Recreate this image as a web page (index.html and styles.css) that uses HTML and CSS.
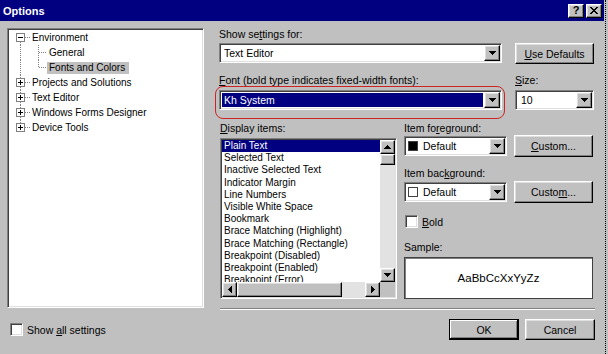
FILE: index.html
```html
<!DOCTYPE html>
<html>
<head>
<meta charset="utf-8">
<title>Options</title>
<link rel="stylesheet" href="styles.css">
</head>
<body>
<div class="window">
  <div class="titlebar">
    <span class="title">Options</span>
    <div class="tb-btns">
      <span class="tb-btn raised help">?</span>
      <span class="tb-btn raised close"><svg width="8" height="7" viewBox="0 0 8 7"><path d="M0 0h2v1h-2zM6 0h2v1h-2zM1 1h2v1h-2zM5 1h2v1h-2zM2 2h4v1h-4zM3 3h2v1h-2zM2 4h4v1h-4zM1 5h2v1h-2zM5 5h2v1h-2zM0 6h2v1h-2zM6 6h2v1h-2z" fill="#000"/></svg></span>
    </div>
  </div>

  <div class="main">
    <div class="tree sunken">
      <div class="node">
        <svg width="21" height="15" shape-rendering="crispEdges"><g stroke="#808080" stroke-dasharray="1 1" fill="none"><line x1="11.5" y1="12" x2="11.5" y2="15"/><line x1="16" y1="7.5" x2="21" y2="7.5"/></g><rect x="7.5" y="3.5" width="8" height="8" fill="#fff" stroke="#808080"/><path d="M9 7.5h5" stroke="#000"/></svg>
        <span class="txt">Environment</span>
      </div>
      <div class="node">
        <svg width="38" height="15" shape-rendering="crispEdges"><g stroke="#808080" stroke-dasharray="1 1" fill="none"><line x1="11.5" y1="0" x2="11.5" y2="15"/><line x1="29.5" y1="0" x2="29.5" y2="15"/><line x1="30" y1="7.5" x2="38" y2="7.5"/></g></svg>
        <span class="txt">General</span>
      </div>
      <div class="node">
        <svg width="38" height="15" shape-rendering="crispEdges"><g stroke="#808080" stroke-dasharray="1 1" fill="none"><line x1="11.5" y1="0" x2="11.5" y2="15"/><line x1="29.5" y1="0" x2="29.5" y2="8"/><line x1="30" y1="7.5" x2="38" y2="7.5"/></g></svg>
        <span class="txt selected">Fonts and Colors</span>
      </div>
      <div class="node">
        <svg width="21" height="15" shape-rendering="crispEdges"><g stroke="#808080" stroke-dasharray="1 1" fill="none"><line x1="11.5" y1="0" x2="11.5" y2="15"/><line x1="16" y1="7.5" x2="21" y2="7.5"/></g><rect x="7.5" y="3.5" width="8" height="8" fill="#fff" stroke="#808080"/><path d="M9 7.5h5M11.5 5v5" stroke="#000"/></svg>
        <span class="txt">Projects and Solutions</span>
      </div>
      <div class="node">
        <svg width="21" height="15" shape-rendering="crispEdges"><g stroke="#808080" stroke-dasharray="1 1" fill="none"><line x1="11.5" y1="0" x2="11.5" y2="15"/><line x1="16" y1="7.5" x2="21" y2="7.5"/></g><rect x="7.5" y="3.5" width="8" height="8" fill="#fff" stroke="#808080"/><path d="M9 7.5h5M11.5 5v5" stroke="#000"/></svg>
        <span class="txt">Text Editor</span>
      </div>
      <div class="node">
        <svg width="21" height="15" shape-rendering="crispEdges"><g stroke="#808080" stroke-dasharray="1 1" fill="none"><line x1="11.5" y1="0" x2="11.5" y2="15"/><line x1="16" y1="7.5" x2="21" y2="7.5"/></g><rect x="7.5" y="3.5" width="8" height="8" fill="#fff" stroke="#808080"/><path d="M9 7.5h5M11.5 5v5" stroke="#000"/></svg>
        <span class="txt">Windows Forms Designer</span>
      </div>
      <div class="node">
        <svg width="21" height="15" shape-rendering="crispEdges"><g stroke="#808080" stroke-dasharray="1 1" fill="none"><line x1="11.5" y1="0" x2="11.5" y2="4"/><line x1="16" y1="7.5" x2="21" y2="7.5"/></g><rect x="7.5" y="3.5" width="8" height="8" fill="#fff" stroke="#808080"/><path d="M9 7.5h5M11.5 5v5" stroke="#000"/></svg>
        <span class="txt">Device Tools</span>
      </div>
    </div>

    <div class="right">
      <div class="lbl">Show se<u>t</u>tings for:</div>
      <div class="row r-show">
        <div class="combo sunken c-show">
          <span class="ctext">Text Editor</span>
          <span class="ddbtn raised"><svg width="7" height="4" viewBox="0 0 7 4"><path d="M0 0h7v1h-1v1h-1v1h-1v1h-1v-1h-1v-1h-1v-1h-1z" fill="#000"/></svg></span>
        </div>
        <div class="btn raised b-def"><span><u>U</u>se Defaults</span></div>
      </div>

      <div class="row r-font">
        <div class="fcol">
          <div class="lbl"><u>F</u>ont (bold type indicates fixed-width fonts):</div>
          <div class="combo sunken c-font">
            <span class="ctext sel">Kh System</span>
            <span class="ddbtn raised"><svg width="7" height="4" viewBox="0 0 7 4"><path d="M0 0h7v1h-1v1h-1v1h-1v1h-1v-1h-1v-1h-1v-1h-1z" fill="#000"/></svg></span>
          </div>
        </div>
        <div class="scol">
          <div class="lbl"><u>S</u>ize:</div>
          <div class="combo sunken c-size">
            <span class="ctext">10</span>
            <span class="ddbtn raised"><svg width="7" height="4" viewBox="0 0 7 4"><path d="M0 0h7v1h-1v1h-1v1h-1v1h-1v-1h-1v-1h-1v-1h-1z" fill="#000"/></svg></span>
          </div>
        </div>
      </div>

      <div class="lower">
        <div class="dcol">
          <div class="lbl"><u>D</u>isplay items:</div>
          <div class="list sunken">
            <div class="items">
              <div class="item sel">Plain Text</div>
              <div class="item">Selected Text</div>
              <div class="item">Inactive Selected Text</div>
              <div class="item">Indicator Margin</div>
              <div class="item">Line Numbers</div>
              <div class="item">Visible White Space</div>
              <div class="item">Bookmark</div>
              <div class="item">Brace Matching (Highlight)</div>
              <div class="item">Brace Matching (Rectangle)</div>
              <div class="item">Breakpoint (Disabled)</div>
              <div class="item">Breakpoint (Enabled)</div>
              <div class="item">Breakpoint (Error)</div>
            </div>
            <div class="vscroll">
              <span class="sb-btn raised"><svg width="7" height="4" viewBox="0 0 7 4"><path d="M3 0h1v1h1v1h1v1h1v1h-7v-1h1v-1h1v-1h1z" fill="#000"/></svg></span>
              <span class="thumb-v raised"></span>
              <span class="track"></span>
              <span class="sb-btn raised"><svg width="7" height="4" viewBox="0 0 7 4"><path d="M0 0h7v1h-1v1h-1v1h-1v1h-1v-1h-1v-1h-1v-1h-1z" fill="#000"/></svg></span>
            </div>
            <div class="hscroll">
              <span class="sb-btn raised"><svg width="4" height="7" viewBox="0 0 4 7"><path d="M3 0h1v7h-1v-1h-1v-1h-1v-1h-1v-1h1v-1h1v-1h1z" fill="#000"/></svg></span>
              <span class="thumb-h raised"></span>
              <span class="track"></span>
              <span class="sb-btn raised"><svg width="4" height="7" viewBox="0 0 4 7"><path d="M0 0h1v1h1v1h1v1h1v1h-1v1h-1v1h-1v1h-1z" fill="#000"/></svg></span>
            </div>
            <div class="corner"></div>
          </div>
        </div>

        <div class="pcol">
          <div class="lbl">Item fo<u>r</u>eground:</div>
          <div class="row r-color">
            <div class="combo sunken c-color">
              <span class="swatch black"></span>
              <span class="ctext">Default</span>
              <span class="ddbtn raised"><svg width="7" height="4" viewBox="0 0 7 4"><path d="M0 0h7v1h-1v1h-1v1h-1v1h-1v-1h-1v-1h-1v-1h-1z" fill="#000"/></svg></span>
            </div>
            <div class="btn raised b-custom"><span><u>C</u>ustom...</span></div>
          </div>
          <div class="lbl l-bg">Item bac<u>k</u>ground:</div>
          <div class="row r-color r-bg">
            <div class="combo sunken c-color">
              <span class="swatch white"></span>
              <span class="ctext">Default</span>
              <span class="ddbtn raised"><svg width="7" height="4" viewBox="0 0 7 4"><path d="M0 0h7v1h-1v1h-1v1h-1v1h-1v-1h-1v-1h-1v-1h-1z" fill="#000"/></svg></span>
            </div>
            <div class="btn raised b-custom"><span>Custo<u>m</u>...</span></div>
          </div>
          <div class="check-row bold-row">
            <span class="check sunken"></span>
            <span><u>B</u>old</span>
          </div>
          <div class="lbl l-sample">Sample:</div>
          <div class="sample">AaBbCcXxYyZz</div>
        </div>
      </div>

      <div class="sep"></div>
    </div>
  </div>

  <div class="footer">
    <div class="check-row">
      <span class="check sunken"></span>
      <span>Show <u>a</u>ll settings</span>
    </div>
    <div class="btn default b-ok"><span>OK</span></div>
    <div class="btn raised b-cancel"><span>Cancel</span></div>
  </div>

  <div class="callout"></div>
</div>
</body>
</html>
```

FILE: styles.css
```css
* { box-sizing: border-box; }
html, body { margin: 0; padding: 0; }
body {
  width: 608px;
  height: 354px;
  overflow: hidden;
  background: #c0c0c0;
  font-family: "Liberation Sans", Arial, sans-serif;
  font-size: 10.5px;
  color: #000;
}
u { text-decoration: underline; text-underline-offset: 1px; }

.window {
  position: relative;
  width: 606px;
  height: 354px;
  border-right: 1px dotted #000;
}

/* shared 3D styles */
.raised {
  background: #c0c0c0;
  border: 1px solid;
  border-color: #fff #000 #000 #fff;
  box-shadow: inset -1px -1px #808080, inset 1px 1px #dfdfdf;
}
.sunken {
  border: 1px solid;
  border-color: #808080 #fff #fff #808080;
  box-shadow: inset 1px 1px #404040, inset -1px -1px #dfdfdf;
  padding: 1px;
}

/* title bar */
.titlebar {
  width: 604px;
  height: 21px;
  background: #000080;
  display: flex;
  align-items: center;
  padding: 0 2px 0 3px;
}
.title {
  color: #fff;
  font-weight: bold;
  font-size: 11px;
}
.tb-btns {
  margin-left: auto;
  display: flex;
  gap: 2px;
}
.tb-btn {
  width: 16px;
  height: 14px;
  display: flex;
  align-items: center;
  justify-content: center;
  font-weight: bold;
  font-size: 11px;
  line-height: 1;
}

/* layout */
.main {
  display: flex;
  align-items: flex-start;
  padding: 7px 0 0 7px;
}

/* tree */
.tree {
  width: 197px;
  height: 280px;
  background: #fff;
}
.node {
  height: 15px;
  display: flex;
  align-items: center;
  font-size: 10px;
  white-space: nowrap;
}
.node svg { flex: none; display: block; }
.node .txt {
  height: 12px;
  line-height: 12px;
  padding: 0 4px 0 2px;
}
.node .txt.selected { background: #c0c0c0; }

/* right panel */
.right {
  margin-left: 15px;
  width: 377px;
  display: flex;
  flex-direction: column;
}
.lbl {
  height: 13px;
  line-height: 13px;
  white-space: nowrap;
}
.row { display: flex; }
.r-show {
  margin-top: 2px;
  gap: 13px;
  align-items: flex-start;
}

.combo {
  display: flex;
  height: 20px;
  background: #fff;
}
.c-show, .c-font { width: 283px; }
.c-size { width: 79px; }
.ctext {
  flex: 1;
  padding-left: 3px;
  line-height: 16px;
  white-space: nowrap;
  overflow: hidden;
}
.ctext.sel {
  background: #000080;
  color: #fff;
  margin: 1px;
  padding-left: 2px;
  line-height: 14px;
}
.c-size .ctext { padding-left: 4px; }
.ddbtn {
  flex: none;
  width: 16px;
  height: 16px;
  display: flex;
  align-items: center;
  justify-content: center;
}
.ddbtn svg, .sb-btn svg { display: block; }

.btn {
  height: 21px;
  display: flex;
  align-items: center;
  justify-content: center;
  white-space: nowrap;
}
.b-def { width: 79px; }

.r-font {
  margin-top: 10px;
  gap: 13px;
}
.fcol { width: 283px; }
.scol { width: 79px; }
.fcol .combo, .scol .combo { margin-top: 3px; }

/* lower section */
.lower {
  display: flex;
  margin-top: 12px;
}
.dcol {
  width: 177px;
  margin-left: 1px;
}
.list {
  margin-top: 3px;
  height: 161px;
  background: #fff;
  display: grid;
  grid-template-columns: 1fr 15px;
  grid-template-rows: 1fr 15px;
}
.items {
  overflow: hidden;
  font-size: 10px;
  line-height: 12.2px;
}
.item {
  padding-left: 2px;
  white-space: nowrap;
}
.item.sel { background: #000080; color: #fff; }

.vscroll {
  display: flex;
  flex-direction: column;
  background: #e2e2e2;
}
.hscroll {
  display: flex;
  background: #e2e2e2;
}
.sb-btn {
  flex: none;
  width: 15px;
  height: 15px;
  display: flex;
  align-items: center;
  justify-content: center;
}
.vscroll .sb-btn { height: 14px; }
.thumb-v { flex: none; height: 11px; }
.thumb-h { flex: none; width: 105px; }
.track { flex: 1; }
.corner { background: #c0c0c0; }

.pcol {
  width: 189px;
  margin-left: 7px;
}
.r-color {
  gap: 7px;
  align-items: center;
  height: 22px;
}
.c-color { width: 103px; align-items: center; }
.swatch {
  flex: none;
  width: 10px;
  height: 10px;
  margin-left: 2px;
  border: 1px solid #404040;
}
.swatch.black { background: #000; }
.swatch.white { background: #fff; }
.c-color .ctext { padding-left: 5px; }
.b-custom { width: 79px; height: 22px; }
.l-bg { margin-top: 10px; }
.r-bg { margin-top: 1px; }

.check-row {
  display: flex;
  align-items: center;
  gap: 4px;
  white-space: nowrap;
}
.check {
  width: 13px;
  height: 13px;
  background: #fff;
  flex: none;
}
.bold-row {
  margin-top: 12px;
  height: 13px;
  padding-left: 1px;
}
.l-sample { margin-top: 13px; }
.sample {
  margin-top: 3px;
  height: 42px;
  background: #fff;
  border: 1px solid #404040;
  box-shadow: inset 1px 1px #808080;
  display: flex;
  align-items: center;
  justify-content: center;
  font-size: 11.5px;
}

.sep {
  margin: 9px 0 0 1px;
  width: 375px;
  border-top: 1px solid #808080;
  border-bottom: 1px solid #fff;
}

/* footer */
.footer {
  display: flex;
  align-items: center;
  height: 21px;
  margin-top: 9px;
  padding: 0 10px;
}
.b-ok {
  margin-left: auto;
  width: 70px;
}
.b-cancel {
  width: 70px;
  margin-left: 6px;
}
.btn.default {
  background: #c0c0c0;
  border: 1px solid #000;
  box-shadow: inset -1px -1px #000, inset 1px 1px #fff, inset -2px -2px #808080;
}

/* red annotation ring around the font combo */
.callout {
  position: absolute;
  left: 215px;
  top: 86px;
  width: 290px;
  height: 33px;
  border: 1px solid #cc2424;
  border-radius: 8px;
  pointer-events: none;
}
```
